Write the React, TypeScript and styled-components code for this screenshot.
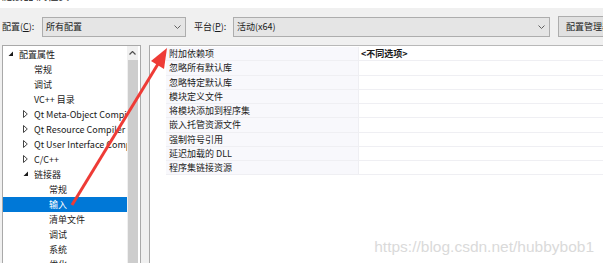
import React from "react";
import styled, { createGlobalStyle } from "styled-components";

const GlobalStyle = createGlobalStyle`
    html, body {
        margin: 0;
        padding: 0;
        background: #f0f0f0;
        overflow: hidden;
    }
    body {
        font-family: "Noto Sans CJK SC", "Microsoft YaHei", sans-serif;
        font-size: 9px;
        color: #1a1a1a;
    }
`;

const Page = styled.div`
    position: relative;
    width: 603px;
    height: 263px;
    overflow: hidden;
    display: flex;
    flex-direction: column;
`;

const TitleBar = styled.div`
    height: 8px;
    flex: none;
    background: #ffffff;
    overflow: hidden;
    span {
        display: block;
        margin-top: -11px;
        padding-left: 1px;
        font-size: 11px;
        line-height: 12px;
        color: #222;
    }
`;

const Toolbar = styled.div`
    height: 37px;
    flex: none;
    display: flex;
    align-items: center;
    padding-left: 2px;
`;

const Label = styled.div<{ width: number }>`
    width: ${(p) => p.width}px;
    flex: none;
    white-space: nowrap;
    u {
        text-decoration: underline;
    }
`;

const Combo = styled.div<{ width: number }>`
    width: ${(p) => p.width}px;
    height: 20px;
    box-sizing: border-box;
    flex: none;
    border: 1px solid #adadad;
    background: #e5e5e5;
    display: flex;
    align-items: center;
    justify-content: space-between;
    padding: 0 4px 0 3px;
    margin-right: 8px;
`;

const Button = styled.div`
    width: 80px;
    height: 21px;
    box-sizing: border-box;
    flex: none;
    border: 1px solid #adadad;
    background: #e1e1e1;
    display: flex;
    align-items: center;
    padding-left: 7px;
    white-space: nowrap;
`;

const Body = styled.div`
    flex: 1;
    min-height: 0;
    overflow: hidden;
    display: flex;
    padding-left: 2px;
    gap: 8px;
`;

const TreePanel = styled.div`
    width: 139px;
    flex: none;
    box-sizing: border-box;
    border: 1px solid #a9a9a9;
    border-bottom: none;
    background: #ffffff;
    display: flex;
    padding-right: 2px;
`;

const TreeList = styled.div`
    flex: 1;
    padding-top: 1px;
    overflow: hidden;
`;

const TreeRow = styled.div<{ level: number; selected?: boolean }>`
    height: 15px;
    display: flex;
    align-items: center;
    white-space: nowrap;
    position: relative;
    padding-left: ${(p) => 16 + p.level * 15}px;
    background: ${(p) => (p.selected ? "#0078d7" : "transparent")};
    color: ${(p) => (p.selected ? "#ffffff" : "#1a1a1a")};
    .twisty {
        position: absolute;
        left: ${(p) => 5 + p.level * 15}px;
        top: 4px;
    }
`;

const Scrollbar = styled.div`
    width: 11px;
    flex: none;
    background: #f0f0f0;
    display: flex;
    flex-direction: column;
    align-items: center;
`;

const ScrollArrow = styled.div`
    height: 14px;
    flex: none;
    display: flex;
    align-items: center;
    justify-content: center;
`;

const ScrollThumb = styled.div`
    width: 10px;
    flex: 1;
    background: #cdcdcd;
`;

const GridPanel = styled.div`
    flex: 1;
    border-left: 1px solid #a9a9a9;
    border-top: 1px solid #b8b8b8;
    background: #ffffff;
    padding-top: 1px;
`;

const GridRow = styled.div`
    height: 13.25px;
    display: flex;
    border-bottom: 1px solid #efeff3;
    margin-left: 16px;
`;

const NameCell = styled.div`
    width: 189px;
    flex: none;
    background: #f8f8fc;
    padding-left: 3px;
    line-height: 13px;
    white-space: nowrap;
    border-right: 1px solid #efeff3;
`;

const ValueCell = styled.div`
    flex: 1;
    padding-left: 2px;
    line-height: 13px;
    font-weight: bold;
`;

const Arrow = styled.svg`
    position: absolute;
    left: 0;
    top: 0;
    pointer-events: none;
`;

const Watermark = styled.div`
    position: absolute;
    right: 9px;
    bottom: 7px;
    font-family: "Liberation Sans", Arial, sans-serif;
    font-size: 15.5px;
    color: #dadada;
`;

const Chevron = () => (
    <svg width="7" height="4" viewBox="0 0 7 4">
        <path d="M0.5 0.5L3.5 3.5L6.5 0.5" stroke="#606060" strokeWidth="1" fill="none" />
    </svg>
);

const Expanded = () => (
    <svg className="twisty" width="6" height="6" viewBox="0 0 6 6">
        <path d="M5 0.5L5 5L0.5 5Z" fill="#1a1a1a" />
    </svg>
);

const Collapsed = () => (
    <svg className="twisty" width="5" height="8" viewBox="0 0 5 8" style={{ top: 3 }}>
        <path d="M0.5 0.5L4.3 4L0.5 7.5Z" fill="none" stroke="#444" strokeWidth="1" />
    </svg>
);

interface TreeItem {
    text: string;
    level: number;
    twisty?: "open" | "closed";
    selected?: boolean;
}

const treeItems: TreeItem[] = [
    { text: "配置属性", level: 0, twisty: "open" },
    { text: "常规", level: 1 },
    { text: "调试", level: 1 },
    { text: "VC++ 目录", level: 1 },
    { text: "Qt Meta-Object Compiler", level: 1, twisty: "closed" },
    { text: "Qt Resource Compiler", level: 1, twisty: "closed" },
    { text: "Qt User Interface Compiler", level: 1, twisty: "closed" },
    { text: "C/C++", level: 1, twisty: "closed" },
    { text: "链接器", level: 1, twisty: "open" },
    { text: "常规", level: 2 },
    { text: "输入", level: 2, selected: true },
    { text: "清单文件", level: 2 },
    { text: "调试", level: 2 },
    { text: "系统", level: 2 },
    { text: "优化", level: 2 },
];

const props = [
    "附加依赖项",
    "忽略所有默认库",
    "忽略特定默认库",
    "模块定义文件",
    "将模块添加到程序集",
    "嵌入托管资源文件",
    "强制符号引用",
    "延迟加载的 DLL",
    "程序集链接资源",
];

const App = () => {
    return (
        <Page>
            <GlobalStyle />
            <TitleBar>
                <span>链接器 属性页</span>
            </TitleBar>
            <Toolbar>
                <Label width={40}>
                    配置(<u>C</u>):
                </Label>
                <Combo width={144}>
                    <span>所有配置</span>
                    <Chevron />
                </Combo>
                <Label width={39}>
                    平台(<u>P</u>):
                </Label>
                <Combo width={317}>
                    <span>活动(x64)</span>
                    <Chevron />
                </Combo>
                <Button>配置管理器...</Button>
            </Toolbar>
            <Body>
                <TreePanel>
                    <TreeList>
                        {treeItems.map((item, i) => (
                            <TreeRow key={i} level={item.level} selected={item.selected}>
                                {item.twisty === "open" && <Expanded />}
                                {item.twisty === "closed" && <Collapsed />}
                                {item.text}
                            </TreeRow>
                        ))}
                    </TreeList>
                    <Scrollbar>
                        <ScrollArrow>
                            <svg width="7" height="4" viewBox="0 0 7 4">
                                <path d="M0.5 3.5L3.5 0.5L6.5 3.5" stroke="#505050" strokeWidth="1.2" fill="none" />
                            </svg>
                        </ScrollArrow>
                        <ScrollThumb />
                    </Scrollbar>
                </TreePanel>
                <GridPanel>
                    {props.map((name, i) => (
                        <GridRow key={i}>
                            <NameCell>{name}</NameCell>
                            <ValueCell>{i === 0 ? "<不同选项>" : ""}</ValueCell>
                        </GridRow>
                    ))}
                </GridPanel>
            </Body>
            <Arrow width="603" height="263" viewBox="0 0 603 263">
                <line x1="72" y1="205" x2="158" y2="64" stroke="#ee3b36" strokeWidth="3" />
                <polygon points="167,48 164,69 151,61" fill="#ee3b36" />
            </Arrow>
            <Watermark>https://blog.csdn.net/hubbybob1</Watermark>
        </Page>
    );
};

export default App;
